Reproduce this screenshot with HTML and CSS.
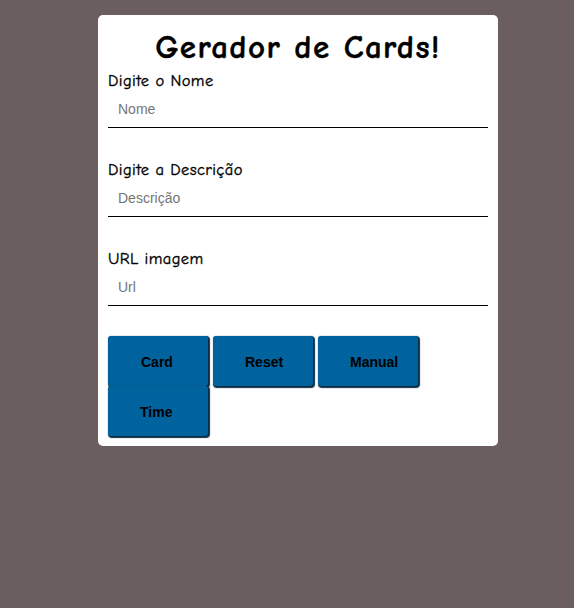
FILE: index.html
```html
<!DOCTYPE html>
<html lang="pt-BR">
<head>
<meta charset="utf-8">
<title>Gerador de Cards</title>
<link rel="stylesheet" href="styles.css">
</head>
<body>
<main class="card">
  <h1 class="title">Gerador de Cards!</h1>
  <form class="form">
    <label class="label" for="nome">Digite o Nome</label>
    <input class="field" id="nome" type="text" placeholder="Nome">
    <label class="label" for="desc">Digite a Descrição</label>
    <input class="field" id="desc" type="text" placeholder="Descrição">
    <label class="label" for="url">URL imagem</label>
    <input class="field" id="url" type="text" placeholder="Url">
    <div class="buttons">
      <button class="btn btn-first" type="button">Card</button>
      <button class="btn" type="button">Reset</button>
      <button class="btn" type="button">Manual</button>
      <button class="btn" type="button">Time</button>
    </div>
  </form>
</main>
</body>
</html>
```
FILE: styles.css
```css
html, body {
  margin: 0;
  padding: 0;
}
body {
  background: #6a5e5e;
  min-height: 608px;
  font-family: "Comic Sans MS", "Comic Neue", "DejaVu Sans", sans-serif;
  padding: 15px 0 0 98px;
  box-sizing: border-box;
}
.card {
  width: 400px;
  box-sizing: border-box;
  background: #fff;
  border-radius: 5px;
  padding: 10px;
}
.title {
  margin: 0;
  text-align: center;
  font-size: 33px;
  line-height: 44px;
  letter-spacing: 1.4px;
  font-weight: bold;
  color: #000;
  -webkit-text-stroke: 0.4px #000;
}
.form {
  display: flex;
  flex-direction: column;
}
.label {
  font-size: 16.5px;
  line-height: 21px;
  padding-top: 1px;
  letter-spacing: 0.4px;
  color: #000;
  -webkit-text-stroke: 0.35px #000;
}
.field {
  font-family: "Liberation Sans", Arial, sans-serif;
  font-size: 14px;
  line-height: 16px;
  padding: 10px;
  border: none;
  border-bottom: 1px solid #000;
  margin: 0 0 30px;
  outline: none;
  width: 100%;
  box-sizing: border-box;
  color: #000;
  background: transparent;
}
.field::placeholder {
  color: #757575;
}
.buttons {
  display: flex;
  flex-wrap: wrap;
  column-gap: 5px;
}
.btn {
  width: 100px;
  height: 50px;
  box-sizing: border-box;
  padding: 2px 0 0 32px;
  background: #00639e;
  border: none;
  border-radius: 3px;
  box-shadow: 1px 1px 1px 1px #0a2d44;
  font-family: "Liberation Sans", Arial, sans-serif;
  font-weight: bold;
  font-size: 14px;
  color: #000;
  text-align: left;
  white-space: nowrap;
}
.btn-first {
  padding-left: 33px;
}
```
